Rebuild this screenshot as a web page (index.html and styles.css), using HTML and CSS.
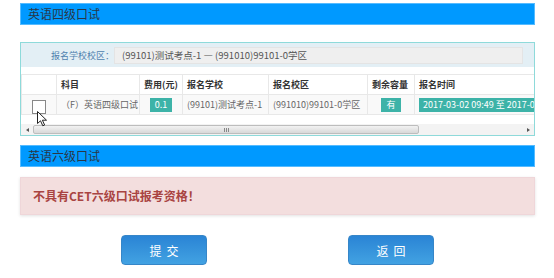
FILE: index.html
```html
<!DOCTYPE html>
<html lang="zh-CN">
<head>
    <meta charset="UTF-8">
    <title>口试报名</title>
    <link rel="stylesheet" href="styles.css">
</head>
<body>
    <div class="page">
        <!-- 四级 -->
        <div class="sec-title">英语四级口试</div>

        <div class="panel">
            <div class="panel-head">
                <span class="label">报名学校校区：</span>
                <div class="select">(99101)测试考点-1 — (991010)99101-0学区</div>
            </div>

            <div class="grid">
                <table>
                    <colgroup>
                        <col style="width:35px">
                        <col style="width:83px">
                        <col style="width:43px">
                        <col style="width:86px">
                        <col style="width:99px">
                        <col style="width:47px">
                        <col style="width:160px">
                    </colgroup>
                    <thead>
                        <tr>
                            <th></th>
                            <th>科目</th>
                            <th>费用(元)</th>
                            <th>报名学校</th>
                            <th>报名校区</th>
                            <th>剩余容量</th>
                            <th>报名时间</th>
                        </tr>
                    </thead>
                    <tbody>
                        <tr>
                            <td class="center"><span class="check"></span></td>
                            <td>（F）英语四级口试</td>
                            <td class="center"><span class="tag">0.1</span></td>
                            <td>(99101)测试考点-1</td>
                            <td>(991010)99101-0学区</td>
                            <td class="center"><span class="tag">有</span></td>
                            <td><span class="tag time">2017-03-02 09:49 至 2017-03-31 23:59</span></td>
                        </tr>
                    </tbody>
                </table>
            </div>

            <div class="hscroll">
                <span class="arrow left"></span>
                <div class="track">
                    <div class="thumb"><span class="grip"></span></div>
                </div>
                <span class="arrow right"></span>
            </div>

            <!-- Mauszeiger über der Checkbox -->
            <svg class="cursor" width="11" height="16" viewBox="0 0 11 16">
                <path d="M0.5 0.5 L0.5 12.5 L3.5 9.8 L5.8 14.8 L7.6 14 L5.4 9.2 L9.5 9.2 Z" fill="#fff" stroke="#222" stroke-width="1"/>
            </svg>
        </div>

        <!-- 六级 -->
        <div class="sec-title six">英语六级口试</div>

        <div class="alert">不具有CET六级口试报考资格！</div>

        <div class="actions">
            <button>提交</button>
            <button>返回</button>
        </div>
    </div>
</body>
</html>
```
FILE: styles.css
```css
/* Grundlayout */
body {
    margin: 0;
    font-family: "Noto Sans CJK SC", "Noto Sans", sans-serif;
    color: #333;
    background: #fff;
}
.page {
    padding: 3px 19px 0 20px;
}

/* Blaue Titelleiste */
.sec-title {
    height: 22px;
    box-sizing: border-box;
    background: #0099ff;
    border: 1px solid #55bbff;
    padding-left: 7px;
    font-size: 12px;
    line-height: 20px;
    color: #2a3645;
}
.sec-title.six {
    margin-top: 9px;
}

/* Panel */
.panel {
    position: relative;
    margin-top: 17px;
    height: 94px;
    box-sizing: border-box;
    border: 1px solid #8edada;
}
.panel-head {
    display: flex;
    align-items: center;
    height: 24px;
    padding: 0 11px 0 0;
    background: #e3eff5;
}
.label {
    width: 93px;
    text-align: right;
    font-size: 9px;
    color: #4f7fae;
}
.select {
    flex: 1;
    height: 17px;
    margin-top: 1px;
    box-sizing: border-box;
    padding-left: 7px;
    background: #efefef;
    border: 1px solid #e4e4e4;
    font-size: 9.5px;
    line-height: 15px;
    color: #555;
}

/* Tabelle */
.grid {
    margin-top: 7px;
    overflow: hidden;
}
table {
    width: 553px;
    table-layout: fixed;
    border-collapse: collapse;
    font-size: 9px;
}
th, td {
    height: 19px;
    padding: 0 0 0 4px;
    border: 1px solid #e8e8e8;
    text-align: left;
    white-space: nowrap;
    overflow: hidden;
}
th {
    font-weight: bold;
    color: #333;
}
td {
    color: #666;
    background: #f9f9f9;
}
td.center {
    text-align: center;
    padding: 0;
}
.check {
    display: inline-block;
    width: 14px;
    height: 14px;
    box-sizing: border-box;
    margin-top: 5px;
    border: 1px solid #888;
    background: #fff;
    vertical-align: top;
}
.tag {
    display: inline-block;
    height: 14px;
    padding: 0 5px;
    background: #3db3a8;
    color: #fff;
    line-height: 14px;
    vertical-align: middle;
}
.tag.time {
    padding: 0 4px;
    width: 200px;
}
.cursor {
    position: absolute;
    left: 16px;
    top: 68px;
}

/* Scrollbalken */
.hscroll {
    display: flex;
    align-items: center;
    height: 11px;
    margin-top: 9px;
    background: #f3f3f3;
}
.arrow {
    width: 12px;
    display: flex;
    justify-content: center;
}
.arrow::before {
    content: "";
    border: 2px solid transparent;
}
.arrow.left::before {
    border-right: 3px solid #555;
    border-left: 0;
}
.arrow.right::before {
    border-left: 3px solid #555;
    border-right: 0;
}
.track {
    flex: 1;
    height: 100%;
}
.thumb {
    width: 386px;
    height: 9px;
    margin-top: 1px;
    box-sizing: border-box;
    border: 1px solid #bdbdbd;
    border-radius: 2px;
    background: linear-gradient(#f2f2f2, #d9d9d9);
    display: flex;
    justify-content: center;
    align-items: center;
}
.grip {
    width: 5px;
    height: 4px;
    border-left: 1px solid #888;
    border-right: 1px solid #888;
    box-sizing: border-box;
    background: linear-gradient(to right, transparent 1px, #888 1px, #888 2px, transparent 2px);
}

/* Hinweis */
.alert {
    margin-top: 10px;
    height: 38px;
    box-sizing: border-box;
    padding-left: 12px;
    background: #f3dede;
    border: 1px solid #efd6d9;
    box-shadow: 0 1px 3px rgba(0, 0, 0, 0.12);
    font-size: 12px;
    font-weight: bold;
    line-height: 36px;
    color: #a94442;
}

/* Buttons */
.actions {
    display: flex;
    justify-content: center;
    gap: 141px;
    margin-top: 20px;
}
button {
    width: 86px;
    height: 30px;
    padding: 0 0 0 5px;
    border: 1px solid #3686c8;
    border-radius: 4px;
    background: linear-gradient(#2a84d5, #42a2e2);
    color: #fff;
    font-family: inherit;
    font-size: 12px;
    letter-spacing: 5px;
    cursor: pointer;
}
```
